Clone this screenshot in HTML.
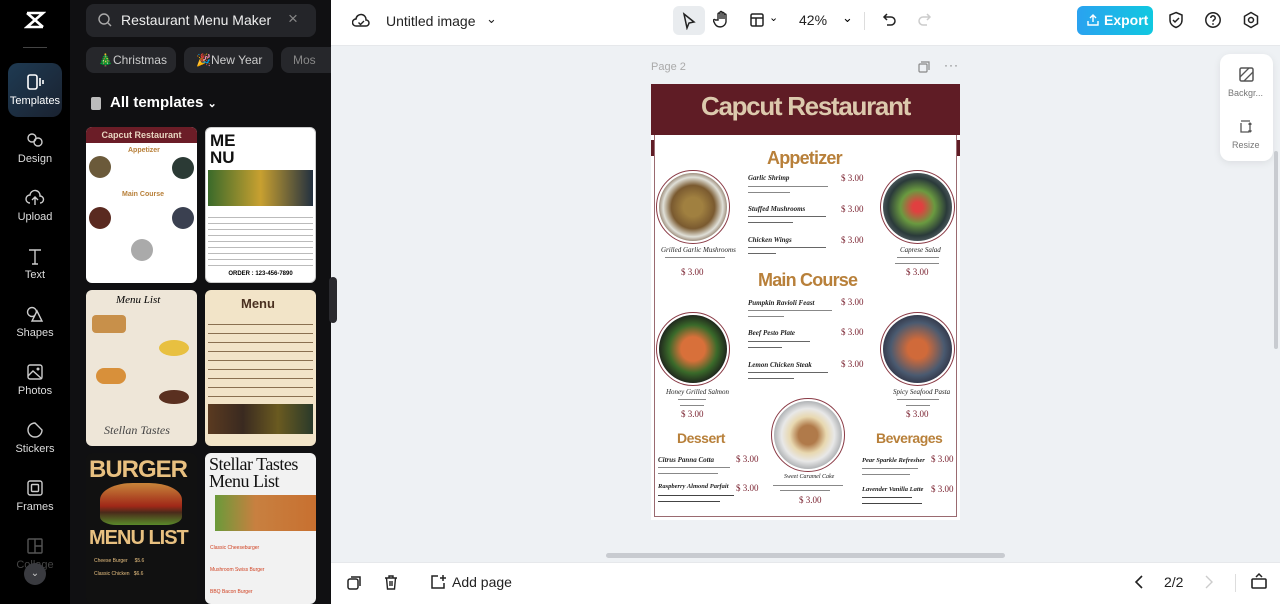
<!DOCTYPE html>
<html><head><meta charset="utf-8">
<style>
*{box-sizing:border-box;margin:0;padding:0}
body{width:1280px;height:604px;overflow:hidden;font-family:"Liberation Sans",sans-serif;background:#eef1f4;position:relative}
.abs{position:absolute}
.rail{left:0;top:0;width:70px;height:604px;background:#000}
.ri{position:absolute;left:0;width:70px;text-align:center;color:#ddd;font-size:11px}
.ri svg{display:block;margin:0 auto 4px}
.panel{left:70px;top:0;width:261px;height:604px;background:#101012}
.chip{position:absolute;top:47px;height:26px;border-radius:8px;background:#26272b;color:#ccc;font-size:12px;line-height:26px;padding-left:12px}
.th{position:absolute;border-radius:6px;overflow:hidden}
.top{left:331px;top:0;width:949px;height:46px;background:#fff;border-bottom:1px solid #e6e8eb}
.bot{left:331px;top:562px;width:949px;height:42px;background:#fff;border-top:1px solid #e6e8eb}
.ser{font-family:"Liberation Serif",serif;font-style:italic}
.dish{position:absolute;border-radius:50%;border:1.5px solid #8a3a45;padding:2px;background:#fff}
.dish div{width:100%;height:100%;border-radius:50%}
.it{position:absolute;font-size:7px;color:#222;white-space:nowrap}
.pr{position:absolute;font-size:9px;color:#7a2230;font-family:"Liberation Serif",serif}
.ln{position:absolute;height:2px;background:#999}
.hd{position:absolute;color:#b8803a;font-weight:bold;font-family:"Liberation Sans",sans-serif}
</style></head><body>
<div class="abs rail">
 <svg class="abs" style="left:24px;top:9px" width="22" height="22" viewBox="0 0 22 22"><path d="M3 4h16L3 18h16M3 4l16 14" stroke="#fff" stroke-width="2.6" fill="none"/></svg>
 <div class="abs" style="left:23px;top:47px;width:24px;height:1px;background:#444"></div>
 <div class="abs" style="left:8px;top:63px;width:54px;height:54px;border-radius:10px;background:linear-gradient(135deg,#1e3a52,#1a2230)"></div>
 <div class="ri" style="top:73px;color:#fff"><svg width="20" height="18" viewBox="0 0 20 18"><rect x="3" y="2" width="9" height="14" rx="2" fill="none" stroke="#fff" stroke-width="1.6"/><path d="M15 5v8M18 7v4" stroke="#fff" stroke-width="1.6"/></svg>Templates</div>
 <div class="ri" style="top:131px"><svg width="20" height="18" viewBox="0 0 20 18"><circle cx="7" cy="7" r="4" fill="none" stroke="#ccc" stroke-width="1.4"/><circle cx="13" cy="11" r="4" fill="none" stroke="#ccc" stroke-width="1.4"/></svg>Design</div>
 <div class="ri" style="top:189px"><svg width="20" height="18" viewBox="0 0 20 18"><path d="M5 14a4 4 0 0 1 0-8 5 5 0 0 1 10 1 3.5 3.5 0 0 1 0 7M10 16V9M7 11l3-3 3 3" fill="none" stroke="#ccc" stroke-width="1.4"/></svg>Upload</div>
 <div class="ri" style="top:247px"><svg width="20" height="18" viewBox="0 0 20 18"><path d="M4 3h12M10 3v14M7 17h6" stroke="#ccc" stroke-width="1.4"/></svg>Text</div>
 <div class="ri" style="top:305px"><svg width="20" height="18" viewBox="0 0 20 18"><circle cx="7" cy="7" r="4.5" fill="none" stroke="#ccc" stroke-width="1.4"/><path d="M12 6l5 10H7z" fill="#000" stroke="#ccc" stroke-width="1.4"/></svg>Shapes</div>
 <div class="ri" style="top:363px"><svg width="20" height="18" viewBox="0 0 20 18"><rect x="3" y="2" width="14" height="14" rx="2" fill="none" stroke="#ccc" stroke-width="1.4"/><path d="M3 13l5-5 9 8" fill="none" stroke="#ccc" stroke-width="1.4"/><circle cx="13" cy="6" r="1.5" fill="#ccc"/></svg>Photos</div>
 <div class="ri" style="top:421px"><svg width="20" height="18" viewBox="0 0 20 18"><path d="M10 2a7 7 0 1 0 7 7l-7-7z" fill="none" stroke="#ccc" stroke-width="1.4"/></svg>Stickers</div>
 <div class="ri" style="top:479px"><svg width="20" height="18" viewBox="0 0 20 18"><rect x="3" y="2" width="14" height="14" rx="2" fill="none" stroke="#ccc" stroke-width="1.4"/><rect x="6.5" y="5.5" width="7" height="7" rx="1" fill="none" stroke="#ccc" stroke-width="1.4"/></svg>Frames</div>
 <div class="ri" style="top:537px;color:#444"><svg width="20" height="18" viewBox="0 0 20 18"><rect x="3" y="2" width="14" height="14" rx="1" fill="none" stroke="#555" stroke-width="1.4"/><path d="M10 2v14M10 9h7" stroke="#555" stroke-width="1.4"/></svg>Collage</div>
 <div class="abs" style="left:24px;top:563px;width:22px;height:22px;border-radius:50%;background:#3a3b40;color:#ccc;font-size:10px;text-align:center;line-height:22px">⌄</div>
</div>
<div class="abs panel">
 <div class="abs" style="left:16px;top:4px;width:230px;height:33px;border-radius:8px;background:#242529"></div>
 <svg class="abs" style="left:27px;top:12px" width="16" height="16" viewBox="0 0 16 16"><circle cx="7" cy="7" r="5" fill="none" stroke="#aaa" stroke-width="1.4"/><path d="M11 11l3 3" stroke="#aaa" stroke-width="1.4"/></svg>
 <div class="abs" style="left:51px;top:12px;color:#eee;font-size:14px">Restaurant Menu Maker</div>
 <div class="abs" style="left:218px;top:9px;color:#888;font-size:17px">×</div>
 <div class="chip" style="left:16px;width:90px">🎄Christmas</div>
 <div class="chip" style="left:114px;width:89px">🎉New Year</div>
 <div class="chip" style="left:211px;width:50px;border-radius:8px 0 0 8px;color:#888">Mos</div>
 <div class="abs" style="left:21px;top:97px;width:10px;height:13px;background:#bbb;border-radius:2px"></div>
 <div class="abs" style="left:40px;top:94px;color:#fff;font-size:15px;font-weight:bold">All templates <span style="font-size:11px">⌄</span></div>
 <div class="th" style="left:16px;top:127px;width:111px;height:156px;background:#fff">
  <div style="height:16px;background:#6b1d27;color:#e8d6c0;font-size:9px;font-weight:bold;text-align:center;line-height:16px">Capcut Restaurant</div>
  <div style="position:absolute;left:3px;top:29px;width:22px;height:22px;border-radius:50%;background:#6b5a3a"></div>
  <div style="position:absolute;right:3px;top:30px;width:22px;height:22px;border-radius:50%;background:#2b3a35"></div>
  <div style="position:absolute;left:3px;top:80px;width:22px;height:22px;border-radius:50%;background:#5a2a20"></div>
  <div style="position:absolute;right:3px;top:80px;width:22px;height:22px;border-radius:50%;background:#3a4050"></div>
  <div style="position:absolute;left:45px;top:112px;width:22px;height:22px;border-radius:50%;background:#aaa"></div>
  <div style="position:absolute;left:42px;top:20px;color:#b8803a;font-size:7px;font-weight:bold">Appetizer</div>
  <div style="position:absolute;left:36px;top:64px;color:#b8803a;font-size:7px;font-weight:bold">Main Course</div>
 </div>
 <div class="th" style="left:135px;top:127px;width:111px;height:156px;background:#fff;border:1px solid #ccc">
  <div style="position:absolute;left:4px;top:4px;font-size:17px;font-weight:900;line-height:17px;color:#111">ME<br>NU</div>
  <div style="position:absolute;left:2px;top:42px;width:105px;height:36px;background:linear-gradient(90deg,#3a6a2a,#c8a030 50%,#223040)"></div>
  <div style="position:absolute;left:2px;top:84px;width:105px;height:56px;background:repeating-linear-gradient(#fff 0 5px,#bbb 5px 6px)"></div>
  <div style="position:absolute;left:0;top:143px;width:109px;text-align:center;font-size:6px;font-weight:bold">ORDER : 123-456-7890</div>
 </div>
 <div class="th" style="left:16px;top:290px;width:111px;height:156px;background:#eee6d8">
  <div style="position:absolute;left:30px;top:4px;font-size:11px;font-style:italic;font-family:'Liberation Serif',serif">Menu List</div>
  <div style="position:absolute;left:6px;top:25px;width:34px;height:18px;background:#c8904a;border-radius:4px"></div>
  <div style="position:absolute;right:8px;top:50px;width:30px;height:16px;background:#e8c040;border-radius:50%"></div>
  <div style="position:absolute;left:10px;top:78px;width:30px;height:16px;background:#d8903a;border-radius:8px"></div>
  <div style="position:absolute;right:8px;top:100px;width:30px;height:14px;background:#5a3020;border-radius:50%"></div>
  <div style="position:absolute;left:18px;top:133px;font-size:12px;font-style:italic;font-family:'Liberation Serif',serif;color:#444">Stellan Tastes</div>
 </div>
 <div class="th" style="left:135px;top:290px;width:111px;height:156px;background:#f2e4c8">
  <div style="position:absolute;left:36px;top:6px;font-size:13px;font-weight:bold;color:#4a3020">Menu</div>
  <div style="position:absolute;left:3px;top:26px;width:105px;height:86px;background:repeating-linear-gradient(#f2e4c8 0 8px,#8a7050 8px 9px)"></div>
  <div style="position:absolute;left:3px;top:114px;width:105px;height:30px;background:linear-gradient(90deg,#5a3a20,#3a2a20,#6a5a20,#2a3a2a)"></div>
 </div>
 <div class="th" style="left:16px;top:453px;width:111px;height:151px;background:#111">
  <div style="position:absolute;left:3px;top:3px;font-size:24px;font-weight:900;color:#e8c080;letter-spacing:-1px">BURGER</div>
  <div style="position:absolute;left:14px;top:30px;width:82px;height:42px;border-radius:40% 40% 20% 20%;background:linear-gradient(#c8853a,#a02818 55%,#4a2a1a 70%,#5a8a2a)"></div>
  <div style="position:absolute;left:3px;top:74px;font-size:20px;font-weight:900;color:#e8c080;letter-spacing:-1px">MENU LIST</div>
  <div style="position:absolute;left:8px;top:102px;font-size:5px;color:#e8c080;line-height:13px">Cheese Burger &nbsp;&nbsp;&nbsp; $5.6<br>Classic Chicken &nbsp;&nbsp;$6.6</div>
 </div>
 <div class="th" style="left:135px;top:453px;width:111px;height:151px;background:#f2f2f2">
  <div style="position:absolute;left:4px;top:3px;font-size:18px;line-height:17px;font-family:'Liberation Serif',serif;color:#111;letter-spacing:-.5px">Stellar Tastes<br>Menu List</div>
  <div style="position:absolute;left:10px;top:42px;width:101px;height:36px;background:linear-gradient(90deg,#6a9a3a,#c88040 40%,#c87030)"></div>
  <div style="position:absolute;left:5px;top:84px;font-size:5px;color:#d04020;line-height:22px">Classic Cheeseburger<br>Mushroom Swiss Burger<br>BBQ Bacon Burger</div>
 </div>
</div>
<div class="abs" style="left:329px;top:277px;width:8px;height:46px;border-radius:4px;background:#2a2a2e"></div>
<div class="abs top">
 <svg class="abs" style="left:21px;top:12px" width="18" height="18" viewBox="0 0 18 18"><path d="M4 14a3.5 3.5 0 0 1 0-7 5 5 0 0 1 10 1 3 3 0 0 1 0 6z" fill="none" stroke="#222" stroke-width="1.5"/><path d="M6.5 10.5l2 2 3.5-3.5" fill="none" stroke="#222" stroke-width="1.4"/></svg>
 <div class="abs" style="left:55px;top:13px;font-size:14px;color:#222">Untitled image</div>
 <div class="abs" style="left:155px;top:11px;font-size:13px;color:#222">⌄</div>
 <div class="abs" style="left:342px;top:6px;width:32px;height:29px;border-radius:6px;background:#e9ecef"></div>
 <svg class="abs" style="left:350px;top:12px" width="16" height="18" viewBox="0 0 16 18"><path d="M3 2l10 8-5 1-2 5z" fill="none" stroke="#222" stroke-width="1.5"/></svg>
 <svg class="abs" style="left:382px;top:10px" width="18" height="20" viewBox="0 0 18 20"><path d="M5 10V4a1 1 0 0 1 2 0v5V2.5a1 1 0 0 1 2 0V9V3.5a1 1 0 0 1 2 0V9V5a1 1 0 0 1 2 0v7a6 6 0 0 1-11 2l-1.5-3a1 1 0 0 1 1.8-1z" fill="none" stroke="#222" stroke-width="1.4"/></svg>
 <svg class="abs" style="left:418px;top:12px" width="16" height="16" viewBox="0 0 16 16"><rect x="2" y="2" width="12" height="12" rx="1.5" fill="none" stroke="#222" stroke-width="1.5"/><path d="M2 6h12M7 6v8" stroke="#222" stroke-width="1.5"/></svg>
 <div class="abs" style="left:438px;top:11px;font-size:11px">⌄</div>
 <div class="abs" style="left:468px;top:12px;font-size:14px;color:#222">42%</div>
 <div class="abs" style="left:511px;top:10px;font-size:13px">⌄</div>
 <div class="abs" style="left:533px;top:12px;width:1px;height:18px;background:#ddd"></div>
 <svg class="abs" style="left:551px;top:12px" width="16" height="16" viewBox="0 0 16 16"><path d="M5 2L2 5l3 3M2 5h7a4 4 0 0 1 0 8H5" fill="none" stroke="#222" stroke-width="1.5"/></svg>
 <svg class="abs" style="left:585px;top:12px" width="16" height="16" viewBox="0 0 16 16"><path d="M11 2l3 3-3 3M14 5H7a4 4 0 0 0 0 8h4" fill="none" stroke="#ccc" stroke-width="1.5"/></svg>
 <div class="abs" style="left:746px;top:6px;width:76px;height:29px;border-radius:6px;background:linear-gradient(90deg,#2aa2f0,#10c8e0);color:#fff;font-size:14px;font-weight:bold;line-height:29px;padding-left:27px">Export</div>
 <svg class="abs" style="left:756px;top:13px" width="12" height="14" viewBox="0 0 12 14"><path d="M6 9V2M3 5l3-3 3 3M1 8v4h10V8" fill="none" stroke="#fff" stroke-width="1.4"/></svg>
 <svg class="abs" style="left:837px;top:11px" width="16" height="18" viewBox="0 0 16 18"><path d="M8 1.5l6 2.5v5c0 4-3 6.5-6 7.5-3-1-6-3.5-6-7.5V4z" fill="none" stroke="#222" stroke-width="1.5"/><path d="M5 9l2 2 4-4" fill="none" stroke="#222" stroke-width="1.5"/></svg>
 <svg class="abs" style="left:873px;top:11px" width="18" height="18" viewBox="0 0 18 18"><circle cx="9" cy="9" r="7.2" fill="none" stroke="#222" stroke-width="1.5"/><path d="M6.8 7a2.2 2.2 0 1 1 3 2c-.6.3-.8.8-.8 1.6" fill="none" stroke="#222" stroke-width="1.5"/><circle cx="9" cy="13" r=".9" fill="#222"/></svg>
 <svg class="abs" style="left:911px;top:11px" width="18" height="18" viewBox="0 0 18 18"><path d="M9 1.5l6.5 3.75v7.5L9 16.5l-6.5-3.75v-7.5z" fill="none" stroke="#222" stroke-width="1.5"/><circle cx="9" cy="9" r="2.5" fill="none" stroke="#222" stroke-width="1.5"/></svg>
</div>
<div class="abs" style="left:1220px;top:54px;width:53px;height:107px;border-radius:10px;background:#fff;box-shadow:0 2px 8px rgba(0,0,0,.08)"></div>
<svg class="abs" style="left:1239px;top:67px" width="15" height="15" viewBox="0 0 15 15"><rect x="1" y="1" width="13" height="13" rx="1.5" fill="none" stroke="#555" stroke-width="1.5"/><path d="M1 10L10 1M5 14l9-9" stroke="#555" stroke-width="1.3"/></svg>
<div class="abs" style="left:1228px;top:88px;font-size:9px;color:#777">Backgr...</div>
<svg class="abs" style="left:1239px;top:119px" width="15" height="15" viewBox="0 0 15 15"><path d="M2 4v9h8M2 2h9M11 4v9M9.5 5.5L11 4l1.5 1.5M9.5 11.5L11 13l1.5-1.5" fill="none" stroke="#555" stroke-width="1.3"/></svg>
<div class="abs" style="left:1232px;top:140px;font-size:9px;color:#777">Resize</div>
<div class="abs" style="left:1274px;top:151px;width:4px;height:198px;border-radius:2px;background:#c8cbd0"></div>
<div class="abs" style="left:606px;top:553px;width:399px;height:5px;border-radius:3px;background:#c8cbd0"></div>
<div class="abs" style="left:651px;top:61px;font-size:11px;color:#aaa">Page 2</div>
<svg class="abs" style="left:918px;top:61px" width="12" height="12" viewBox="0 0 12 12"><rect x="1" y="3" width="8" height="8" rx="1" fill="none" stroke="#888" stroke-width="1.2"/><path d="M3 1h8v8" fill="none" stroke="#888" stroke-width="1.2"/></svg>
<div class="abs" style="left:944px;top:58px;font-size:12px;color:#777;letter-spacing:1px">···</div>
<div class="abs" style="left:651px;top:84px;width:309px;height:436px;background:#fff"></div>
<div class="abs" style="left:651px;top:84px;width:309px;height:51px;background:#5f1c25"></div>
<div class="abs" style="left:651px;top:91px;width:309px;text-align:center;font-size:26px;font-weight:bold;color:#dcc9ad;letter-spacing:-1.3px">Capcut Restaurant</div>
<div class="abs" style="left:651px;top:140px;width:4px;height:16px;background:#5f1c25"></div>
<div class="abs" style="left:956px;top:140px;width:4px;height:16px;background:#5f1c25"></div>
<div class="abs" style="left:654px;top:135px;width:303px;height:382px;border:1.5px solid #9a6a70;border-top:none"></div>
<div class="hd" style="left:767px;top:148px;font-size:18px;letter-spacing:-.8px">Appetizer</div>
<div class="hd" style="left:758px;top:270px;font-size:18px;letter-spacing:-.8px">Main Course</div>
<div class="hd" style="left:677px;top:430px;font-size:14px;letter-spacing:-.5px">Dessert</div>
<div class="hd" style="left:876px;top:430px;font-size:14px;letter-spacing:-.5px">Beverages</div>
<div class="dish" style="left:656px;top:170px;width:74px;height:74px"><div style="background:radial-gradient(#a08040 20%,#7a5a30 45%,#e0e0d8 62%,#5a3a20 80%)"></div></div>
<div class="dish" style="left:880px;top:170px;width:75px;height:74px"><div style="background:radial-gradient(#e04040 10%,#6a9a40 35%,#2a3a3a 60%,#707880 85%)"></div></div>
<div class="dish" style="left:656px;top:312px;width:74px;height:74px"><div style="background:radial-gradient(#d8703a 25%,#3a6a2a 50%,#1a1a1a 75%)"></div></div>
<div class="dish" style="left:880px;top:312px;width:75px;height:74px"><div style="background:radial-gradient(#d06a3a 20%,#4a5a70 55%,#2a2a3a 80%)"></div></div>
<div class="dish" style="left:771px;top:398px;width:74px;height:74px"><div style="background:radial-gradient(#b07a4a 20%,#e8d8b0 38%,#e8e8e8 55%,#909498 80%)"></div></div>
<div class="it ser" style="left:661px;top:246px">Grilled Garlic Mushrooms</div>
<div class="ln" style="left:665px;top:257px;width:60px;height:1px;background:#888"></div>
<div class="pr" style="left:681px;top:267px">$ 3.00</div>
<div class="it ser" style="left:900px;top:246px">Caprese Salad</div>
<div class="ln" style="left:897px;top:257px;width:42px;height:1px;background:#888"></div>
<div class="ln" style="left:895px;top:263px;width:44px;height:1px;background:#888"></div>
<div class="pr" style="left:906px;top:267px">$ 3.00</div>
<div class="it ser" style="left:666px;top:388px">Honey Grilled Salmon</div>
<div class="ln" style="left:678px;top:399px;width:28px;height:1px;background:#888"></div>
<div class="ln" style="left:680px;top:405px;width:24px;height:1px;background:#888"></div>
<div class="pr" style="left:681px;top:409px">$ 3.00</div>
<div class="it ser" style="left:893px;top:388px">Spicy Seafood Pasta</div>
<div class="ln" style="left:897px;top:399px;width:42px;height:1px;background:#888"></div>
<div class="ln" style="left:906px;top:405px;width:24px;height:1px;background:#888"></div>
<div class="pr" style="left:906px;top:409px">$ 3.00</div>
<div class="it ser" style="left:784px;top:474px;font-size:6px">Sweet Caramel Cake</div>
<div class="ln" style="left:773px;top:485px;width:70px;height:1px;background:#888"></div>
<div class="ln" style="left:780px;top:490px;width:50px;height:1px;background:#888"></div>
<div class="pr" style="left:799px;top:495px">$ 3.00</div>
<div class="it ser" style="left:748px;top:174px;font-weight:bold">Garlic Shrimp</div><div class="pr" style="left:841px;top:173px">$ 3.00</div>
<div class="ln" style="left:748px;top:186px;width:80px;height:1px;background:#888"></div><div class="ln" style="left:748px;top:192px;width:42px;height:1px;background:#888"></div>
<div class="it ser" style="left:748px;top:205px;font-weight:bold">Stuffed Mushrooms</div><div class="pr" style="left:841px;top:204px">$ 3.00</div>
<div class="ln" style="left:748px;top:216px;width:78px;height:1px;background:#666"></div><div class="ln" style="left:748px;top:222px;width:45px;height:1px;background:#666"></div>
<div class="it ser" style="left:748px;top:236px;font-weight:bold">Chicken Wings</div><div class="pr" style="left:841px;top:235px">$ 3.00</div>
<div class="ln" style="left:748px;top:247px;width:78px;height:1px;background:#666"></div><div class="ln" style="left:748px;top:253px;width:28px;height:1px;background:#666"></div>
<div class="it ser" style="left:748px;top:299px;font-weight:bold">Pumpkin Ravioli Feast</div><div class="pr" style="left:841px;top:297px">$ 3.00</div>
<div class="ln" style="left:748px;top:310px;width:84px;height:1px;background:#888"></div><div class="ln" style="left:748px;top:316px;width:36px;height:1px;background:#888"></div>
<div class="it ser" style="left:748px;top:329px;font-weight:bold">Beef Pesto Plate</div><div class="pr" style="left:841px;top:327px">$ 3.00</div>
<div class="ln" style="left:748px;top:341px;width:62px;height:1px;background:#666"></div><div class="ln" style="left:748px;top:347px;width:34px;height:1px;background:#666"></div>
<div class="it ser" style="left:748px;top:361px;font-weight:bold">Lemon Chicken Steak</div><div class="pr" style="left:841px;top:359px">$ 3.00</div>
<div class="ln" style="left:748px;top:372px;width:80px;height:1px;background:#666"></div><div class="ln" style="left:748px;top:378px;width:46px;height:1px;background:#666"></div>
<div class="it ser" style="left:658px;top:456px;font-weight:bold">Citrus Panna Cotta</div><div class="pr" style="left:736px;top:454px">$ 3.00</div>
<div class="ln" style="left:658px;top:467px;width:72px;height:1px;background:#888"></div><div class="ln" style="left:658px;top:473px;width:60px;height:1px;background:#888"></div>
<div class="it ser" style="left:658px;top:483px;font-weight:bold;font-size:6.5px">Raspberry Almond Parfait</div><div class="pr" style="left:736px;top:483px">$ 3.00</div>
<div class="ln" style="left:658px;top:495px;width:76px;height:1px;background:#444"></div><div class="ln" style="left:658px;top:501px;width:62px;height:1px;background:#444"></div>
<div class="it ser" style="left:862px;top:457px;font-weight:bold;font-size:6.5px">Pear Sparkle Refresher</div><div class="pr" style="left:931px;top:454px">$ 3.00</div>
<div class="ln" style="left:862px;top:468px;width:56px;height:1px;background:#888"></div><div class="ln" style="left:862px;top:474px;width:48px;height:1px;background:#888"></div>
<div class="it ser" style="left:862px;top:486px;font-weight:bold;font-size:6.5px">Lavender Vanilla Latte</div><div class="pr" style="left:931px;top:484px">$ 3.00</div>
<div class="ln" style="left:862px;top:497px;width:50px;height:1px;background:#444"></div><div class="ln" style="left:862px;top:503px;width:60px;height:1px;background:#444"></div>
<div class="abs bot">
 <svg class="abs" style="left:15px;top:12px" width="16" height="16" viewBox="0 0 16 16"><rect x="2" y="4" width="10" height="10" rx="2" fill="none" stroke="#222" stroke-width="1.5"/><path d="M5 2h9v9" fill="none" stroke="#222" stroke-width="1.5"/></svg>
 <svg class="abs" style="left:52px;top:11px" width="16" height="17" viewBox="0 0 16 17"><path d="M2 4h12M6 4V2h4v2M3.5 4l1 11h7l1-11M7 7v5M9 7v5" fill="none" stroke="#222" stroke-width="1.4"/></svg>
 <svg class="abs" style="left:99px;top:11px" width="17" height="17" viewBox="0 0 17 17"><path d="M14 9v5H2V2h6M13 1v6M10 4h6" fill="none" stroke="#222" stroke-width="1.5"/></svg>
 <div class="abs" style="left:121px;top:11px;font-size:14px;color:#222">Add page</div>
 <svg class="abs" style="left:802px;top:11px" width="12" height="16" viewBox="0 0 12 16"><path d="M9 2L3 8l6 6" fill="none" stroke="#222" stroke-width="1.6"/></svg>
 <div class="abs" style="left:833px;top:11px;font-size:14px;color:#222">2/2</div>
 <svg class="abs" style="left:872px;top:11px" width="12" height="16" viewBox="0 0 12 16"><path d="M3 2l6 6-6 6" fill="none" stroke="#ccc" stroke-width="1.4"/></svg>
 <div class="abs" style="left:904px;top:11px;width:1px;height:18px;background:#ddd"></div>
 <svg class="abs" style="left:919px;top:9px" width="18" height="18" viewBox="0 0 18 18"><rect x="2" y="7" width="14" height="9" rx="1" fill="none" stroke="#222" stroke-width="1.6"/><path d="M6 5l3-3 3 3" fill="none" stroke="#222" stroke-width="1.5"/></svg>
</div>
</body></html>
